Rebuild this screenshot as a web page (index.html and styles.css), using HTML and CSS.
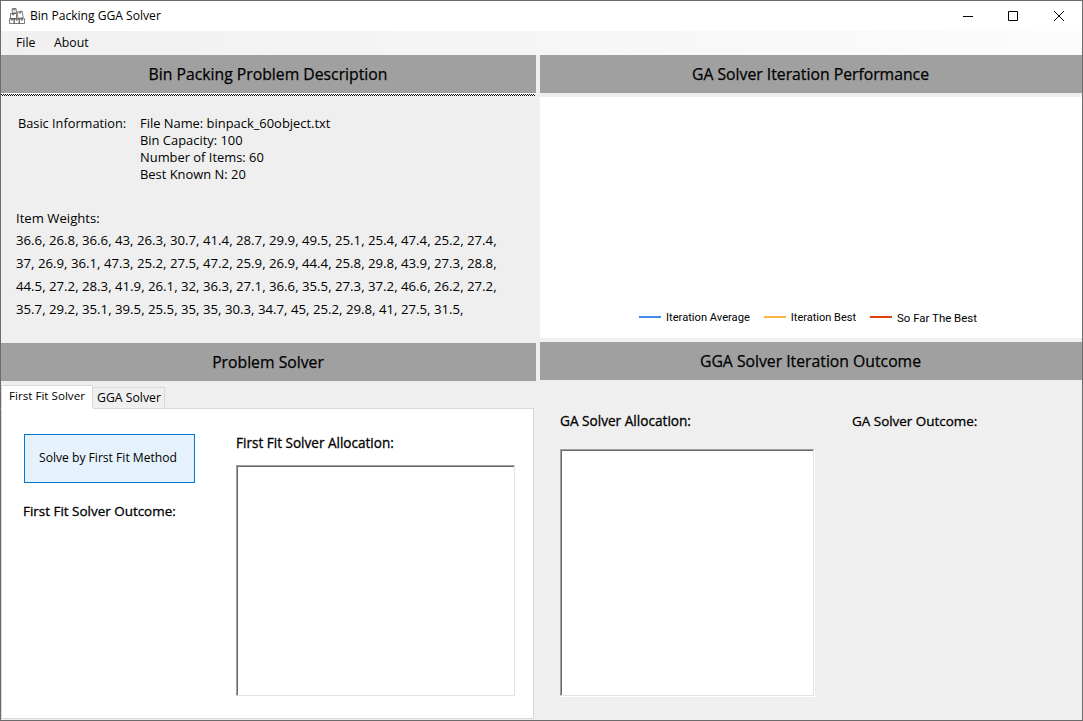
FILE: index.html
```
<!DOCTYPE html>
<html lang="en">
<head>
<meta charset="utf-8">
<title>Bin Packing GGA Solver</title>
<link rel="stylesheet" href="styles.css">
</head>
<body>
<div class="window">
  <header class="titlebar">
    <svg class="app-icon" width="16" height="16" viewBox="0 0 16 16" fill="none" stroke="#444" stroke-width=".7">
      <path d="M3 .8L7 .4l.5 4.300-4 .5z M4.500.8l.2 1.400 1.300-.2-.2-1.400 M1.500 5.500h6v5h-6z M3.500 5.500v1.300h1.500V5.500 M8 4.200l5-1.200 1.200 6.500-5 1.200z M10 3.800l.3 1.500 1.500-.3-.3-1.500 M.5 10.700h4.700v4.800H.5z M5.200 10.700h5v4.800h-5z M10.200 10.700h5.300v4.800h-5.300z M2.200 10.700v1.500h1.300v-1.500 M7 10.700v1.500h1.300v-1.500 M12.200 10.700v1.500h1.300v-1.500"/>
    </svg>
    <span class="app-title">Bin Packing GGA Solver</span>
    <svg class="caption-btns" width="136" height="29" viewBox="0 0 136 29" fill="none" stroke="#000">
      <path d="M17 14.500h10 M62.500 9.500h9v9h-9z"/>
      <path d="M108 9l10 10M118 9l-10 10"/>
    </svg>
  </header>
  <nav class="menubar"><span class="menu-file">File</span><span class="menu-about">About</span></nav>
  <main class="panels">
    <div class="left">
      <section class="description">
        <h2 class="bar">Bin Packing Problem Description</h2>
        <div class="focus-line"></div>
        <div class="info">
          <span class="info-label">Basic Information:</span>
          <div class="info-lines">
            <div>File Name: binpack_60object.txt</div>
            <div>Bin Capacity: 100</div>
            <div>Number of Items: 60</div>
            <div>Best Known N: 20</div>
          </div>
        </div>
        <div class="weights-label">Item Weights:</div>
        <div class="weights">
          <div>36.6, 26.8, 36.6, 43, 26.3, 30.7, 41.4, 28.7, 29.9, 49.5, 25.1, 25.4, 47.4, 25.2, 27.4,</div>
          <div>37, 26.9, 36.1, 47.3, 25.2, 27.5, 47.2, 25.9, 26.9, 44.4, 25.8, 29.8, 43.9, 27.3, 28.8,</div>
          <div>44.5, 27.2, 28.3, 41.9, 26.1, 32, 36.3, 27.1, 36.6, 35.5, 27.3, 37.2, 46.6, 26.2, 27.2,</div>
          <div>35.7, 29.2, 35.1, 39.5, 25.5, 35, 35, 30.3, 34.7, 45, 25.2, 29.8, 41, 27.5, 31.5,</div>
        </div>
      </section>
      <section class="solver">
        <h2 class="bar">Problem Solver</h2>
        <div class="tabs"><span class="tab tab-active">First Fit Solver</span><span class="tab">GGA Solver</span></div>
        <div class="tab-page">
          <div class="solve-col">
            <button class="solve-btn">Solve by First Fit Method</button>
            <div class="caption outcome-caption">First Fit Solver Outcome:</div>
          </div>
          <div class="alloc-col">
            <div class="caption">First Fit Solver Allocation:</div>
            <div class="listbox listbox-fit"></div>
          </div>
        </div>
      </section>
    </div>
    <div class="right">
      <h2 class="bar">GA Solver Iteration Performance</h2>
      <div class="chart">
        <div class="legend">
          <span class="key average"><i></i>Iteration Average</span>
          <span class="key best"><i></i>Iteration Best</span>
          <span class="key so-far"><i></i>So Far The Best</span>
        </div>
      </div>
      <h2 class="bar bar-outcome">GGA Solver Iteration Outcome</h2>
      <div class="outcome">
        <div class="ga-alloc">
          <div class="caption ga-caption">GA Solver Allocation:</div>
          <div class="listbox listbox-ga"></div>
        </div>
        <div class="caption ga-outcome">GA Solver Outcome:</div>
      </div>
    </div>
  </main>
</div>
</body>
</html>
```
FILE: styles.css
```
* { box-sizing: border-box; }
body { margin: 0; font-family: "Open Sans", "Noto Sans", sans-serif; color: #000; }
.window { width: 1083px; height: 721px; border: 1px solid #6b6b6b; background: #efefef; display: flex; flex-direction: column; overflow: hidden; white-space: nowrap; }

.titlebar { height: 30px; flex: none; background: #fff; display: flex; align-items: center; padding-left: 8px; }
.app-icon { margin-bottom: 1px; }
.app-title { margin-left: 5px; font-size: 12.100px; line-height: 16px; }
.caption-btns { margin-left: auto; }
.menubar { height: 24px; flex: none; background: linear-gradient(90deg, #f0f0f0, #fcfcfc); display: flex; font-size: 12.300px; line-height: 23px; padding-left: 15px; }
.menu-about { margin-left: 18.500px; }

.panels { display: flex; gap: 4px; flex: 1; }
.left { width: 535px; }
.right { flex: 1; }
.bar { margin: 0; height: 38px; padding-right: 1px; background: #a0a0a0; font-size: 15.750px; font-weight: 400; line-height: 38px; text-align: center; -webkit-text-stroke: .25px #000; }

.description { height: 288px; }
.focus-line { height: 3px; margin-right: 1px; border-top: 1px solid #fff; background: repeating-conic-gradient(#fff 0 25%, #000 0 50%) 0 0 / 2px 2px; }
.info { display: flex; margin-top: 19px; padding-left: 17px; font-size: 12.920px; line-height: 17px; }
.info-label { width: 122px; font-size: 12.750px; }
.weights-label { margin: 27px 0 0 15px; font-size: 13.150px; line-height: 17px; }
.weights { margin: 2px 0 0 15px; font-size: 13.230px; line-height: 23px; }

.tabs { display: flex; align-items: flex-end; height: 27px; }
.tab { height: 21px; width: 72px; border: 1px solid #d9d9d9; border-left: 0; border-bottom: 0; padding-left: 4px; font-size: 12.260px; line-height: 20px; }
.tab-active { height: 23px; width: 92px; border-left: 1px solid #d9d9d9; background: #fff; padding-left: 7px; font-size: 11.650px; line-height: 20px; box-shadow: 0 1px #fff; }
.tab-page { width: 533px; height: 311px; border: 1px solid #d9d9d9; background: #fff; display: flex; padding: 25px 0 0 22px; }
.solve-btn { display: block; width: 171px; height: 49px; padding: 0 3px 2px 0; border: 1px solid #0078d7; background: #e5f1fb; font: 12.110px/16px "Open Sans", sans-serif; color: #000; }
.caption { font-size: 13.450px; line-height: 18px; -webkit-text-stroke: .3px #000; }
.solve-col { width: 212px; }
.outcome-caption { margin: 19px 0 0 -1px; }
.alloc-col .caption { font-size: 13.550px; }
.listbox { background: #fff; border: 1px solid; border-color: #a0a0a0 #e3e3e3 #e3e3e3 #a0a0a0; box-shadow: inset 1px 1px #696969; }
.listbox-fit { width: 279px; height: 231px; margin-top: 13px; }

.chart { height: 241px; margin-top: 4px; background: #fff; display: flex; align-items: flex-end; }
.legend { display: flex; gap: 14px; padding: 0 0 13px 99px; font: 11.150px/14px Roboto, sans-serif; }
.key { display: flex; align-items: center; }
.key i { width: 22px; height: 2px; margin-right: 5px; margin-bottom: 2px; background: #418cf0; }
.best { font-size: 11px; }
.best i { background: #fcb441; }
.so-far i { background: #e0400a; }
.so-far { font-size: 11.450px; }
.bar-outcome { margin-top: 4px; }
.outcome { display: flex; padding: 32px 0 0 20px; }
.ga-alloc { width: 292px; }
.ga-caption { font-size: 13.630px; }
.listbox-ga { width: 254px; height: 247px; margin-top: 19px; box-shadow: inset 1px 1px #696969, 1px 1px #fff; }
```
